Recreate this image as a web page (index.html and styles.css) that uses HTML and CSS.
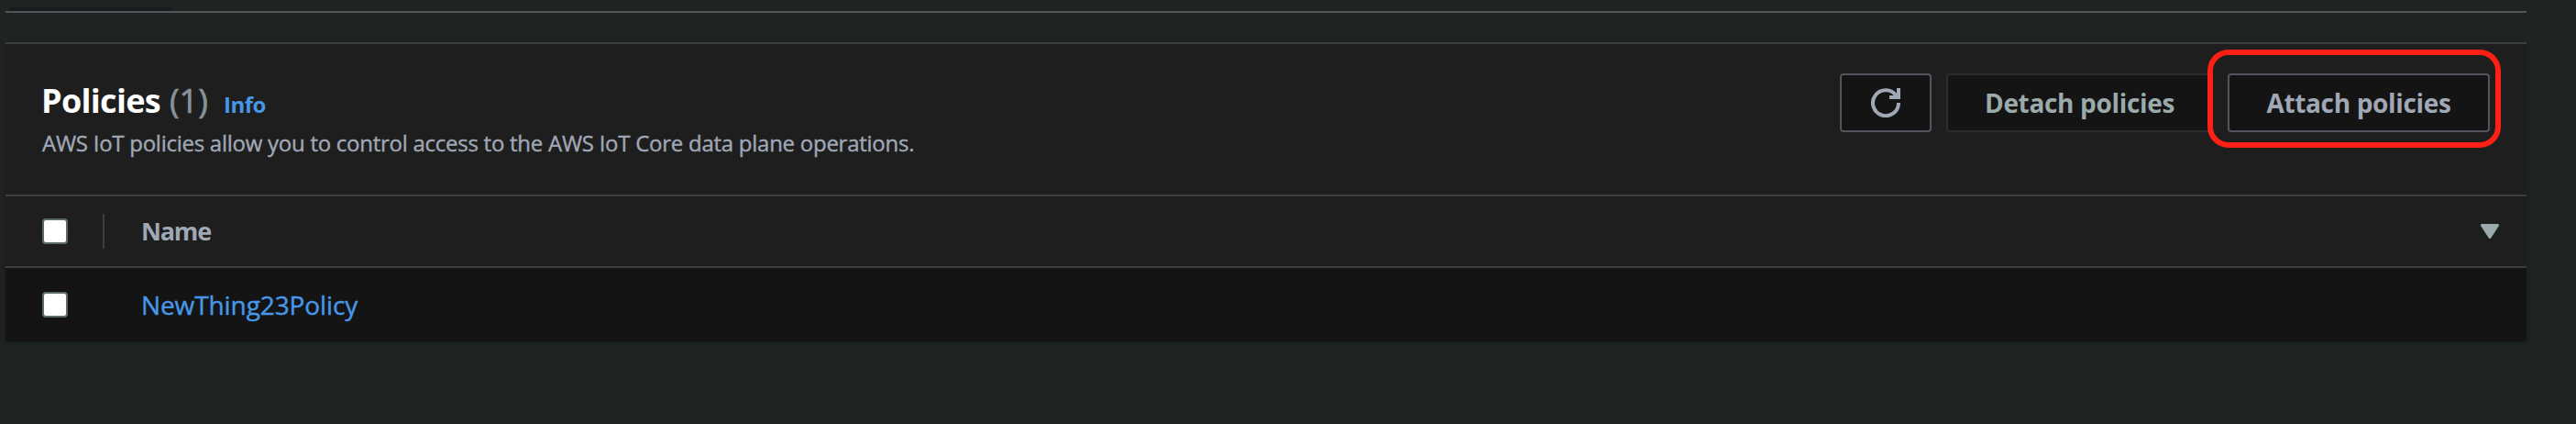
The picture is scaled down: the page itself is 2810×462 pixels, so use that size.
FILE: index.html
```html
<!DOCTYPE html>
<html lang="en">
<head>
<meta charset="utf-8">
<title>Policies</title>
<link rel="stylesheet" href="styles.css">
</head>
<body>
<div class="tabs"><div class="tab-edge"></div></div>
<section class="panel">
  <header class="panel-header">
    <div class="heading">
      <div class="title-row">
        <h2 class="title">Policies</h2>
        <span class="count">(1)</span>
        <a class="info">Info</a>
      </div>
      <p class="description">AWS IoT policies allow you to control access to the AWS IoT Core data plane operations.</p>
    </div>
    <div class="actions">
      <button class="btn btn-icon" aria-label="Refresh">
        <svg class="refresh" viewBox="0 0 32 32" fill="none" stroke="currentColor" stroke-width="4">
          <path d="M30 16A14 14 0 1 1 27.5 8.2"/>
          <path d="M20 10H30V0"/>
        </svg>
      </button>
      <button class="btn btn-detach"><span class="btn-label">Detach policies</span></button>
      <div class="attach-wrap">
        <button class="btn btn-attach"><span class="btn-label">Attach policies</span></button>
        <div class="highlight"></div>
      </div>
    </div>
  </header>
  <div class="row row-head">
    <span class="checkbox"></span>
    <span class="divider"></span>
    <span class="column-name">Name</span>
    <svg class="sort" viewBox="0 0 20 16"><path d="M1.5 1.5H18.5L10 14.5Z" fill="#9baaab" stroke="#9baaab" stroke-width="3" stroke-linejoin="round"/></svg>
  </div>
  <div class="row row-item">
    <span class="checkbox"></span>
    <a class="policy-link">NewThing23Policy</a>
  </div>
</section>
</body>
</html>
```
FILE: styles.css
```css
* { box-sizing: border-box; }
body {
  margin: 0;
  padding: 8px 54px 0 6px;
  height: 462px;
  overflow: hidden;
  background: #212322;
  color: #a0a8b6;
  font-family: "Open Sans", "Noto Sans", sans-serif;
}
.tabs {
  height: 6px;
  padding-left: 4px;
  border-bottom: 2px solid #505859;
}
.tab-edge { width: 178px; height: 4px; background: #1a1b1e; }
.panel {
  width: 2750px;
  margin-top: 32px;
  background: #1e1e1e;
  border-top: 2px solid #3d3f3e;
  box-shadow: 0 2px 2px #14201f, 2px 2px 2px #1c2222, -2px 2px 2px #1e2221;
}
.panel-header {
  display: flex;
  justify-content: space-between;
  height: 164px;
  padding: 32px 40px 0 39px;
}
.heading { padding-top: 6px; }
.title-row { display: flex; align-items: baseline; height: 48px; line-height: 48px; }
.title {
  margin: 0;
  width: 140px;
  color: #fff;
  font-size: 36px;
  font-weight: 700;
  letter-spacing: -0.7px;
}
.count {
  width: 59px;
  color: #87929a;
  font-size: 36px;
  -webkit-text-stroke: 0.7px #87929a;
}
.info { color: #4797e8; font-size: 24px; font-weight: 700; letter-spacing: -0.5px; }
.description {
  margin: 4px 0 0 1px;
  font-size: 24px;
  line-height: 36px;
  letter-spacing: -0.26px;
  white-space: nowrap;
  -webkit-text-stroke: 0.4px #a0a8b6;
}
.actions { display: flex; gap: 16px; height: 64px; }
.btn {
  display: flex;
  align-items: center;
  justify-content: center;
  height: 64px;
  padding: 0;
  border: 2px solid #50565b;
  border-radius: 4px;
  background: #141414;
  color: #a0a8b6;
  font: 700 28px/60px "Open Sans", "Noto Sans", sans-serif;
  letter-spacing: -0.33px;
}
.btn-icon { width: 100px; }
.refresh { width: 32px; height: 32px; }
.btn-detach { width: 291px; border-color: #2c2c2c; color: #9baaab; }
.attach-wrap { position: relative; width: 286px; }
.btn-attach { width: 286px; }
.highlight {
  position: absolute;
  left: -22px;
  top: -26px;
  width: 320px;
  height: 107px;
  border: 6px solid #ff2015;
  border-radius: 23px;
}
.row { display: flex; align-items: center; padding: 0 30px 0 40px; }
.row-head {
  height: 80px;
  border-top: 2px solid #3d3e3d;
  border-bottom: 2px solid #3d3e3d;
}
.row-item { height: 80px; background: #141414; }
.checkbox {
  width: 28px;
  height: 28px;
  border: 2px solid #5c6a6a;
  border-radius: 4px;
  background: #fff;
}
.divider { width: 2px; height: 38px; margin-left: 38px; background: #3d3e3d; }
.column-name {
  margin-left: 40px;
  font-size: 27px;
  font-weight: 700;
  line-height: 76px;
  letter-spacing: -1.2px;
}
.sort { width: 20px; height: 16px; margin-left: auto; }
.policy-link {
  margin-left: 80px;
  padding-bottom: 1px;
  color: #4797e8;
  font-size: 28px;
  letter-spacing: -0.1px;
  -webkit-text-stroke: 0.4px #4797e8;
}
```
